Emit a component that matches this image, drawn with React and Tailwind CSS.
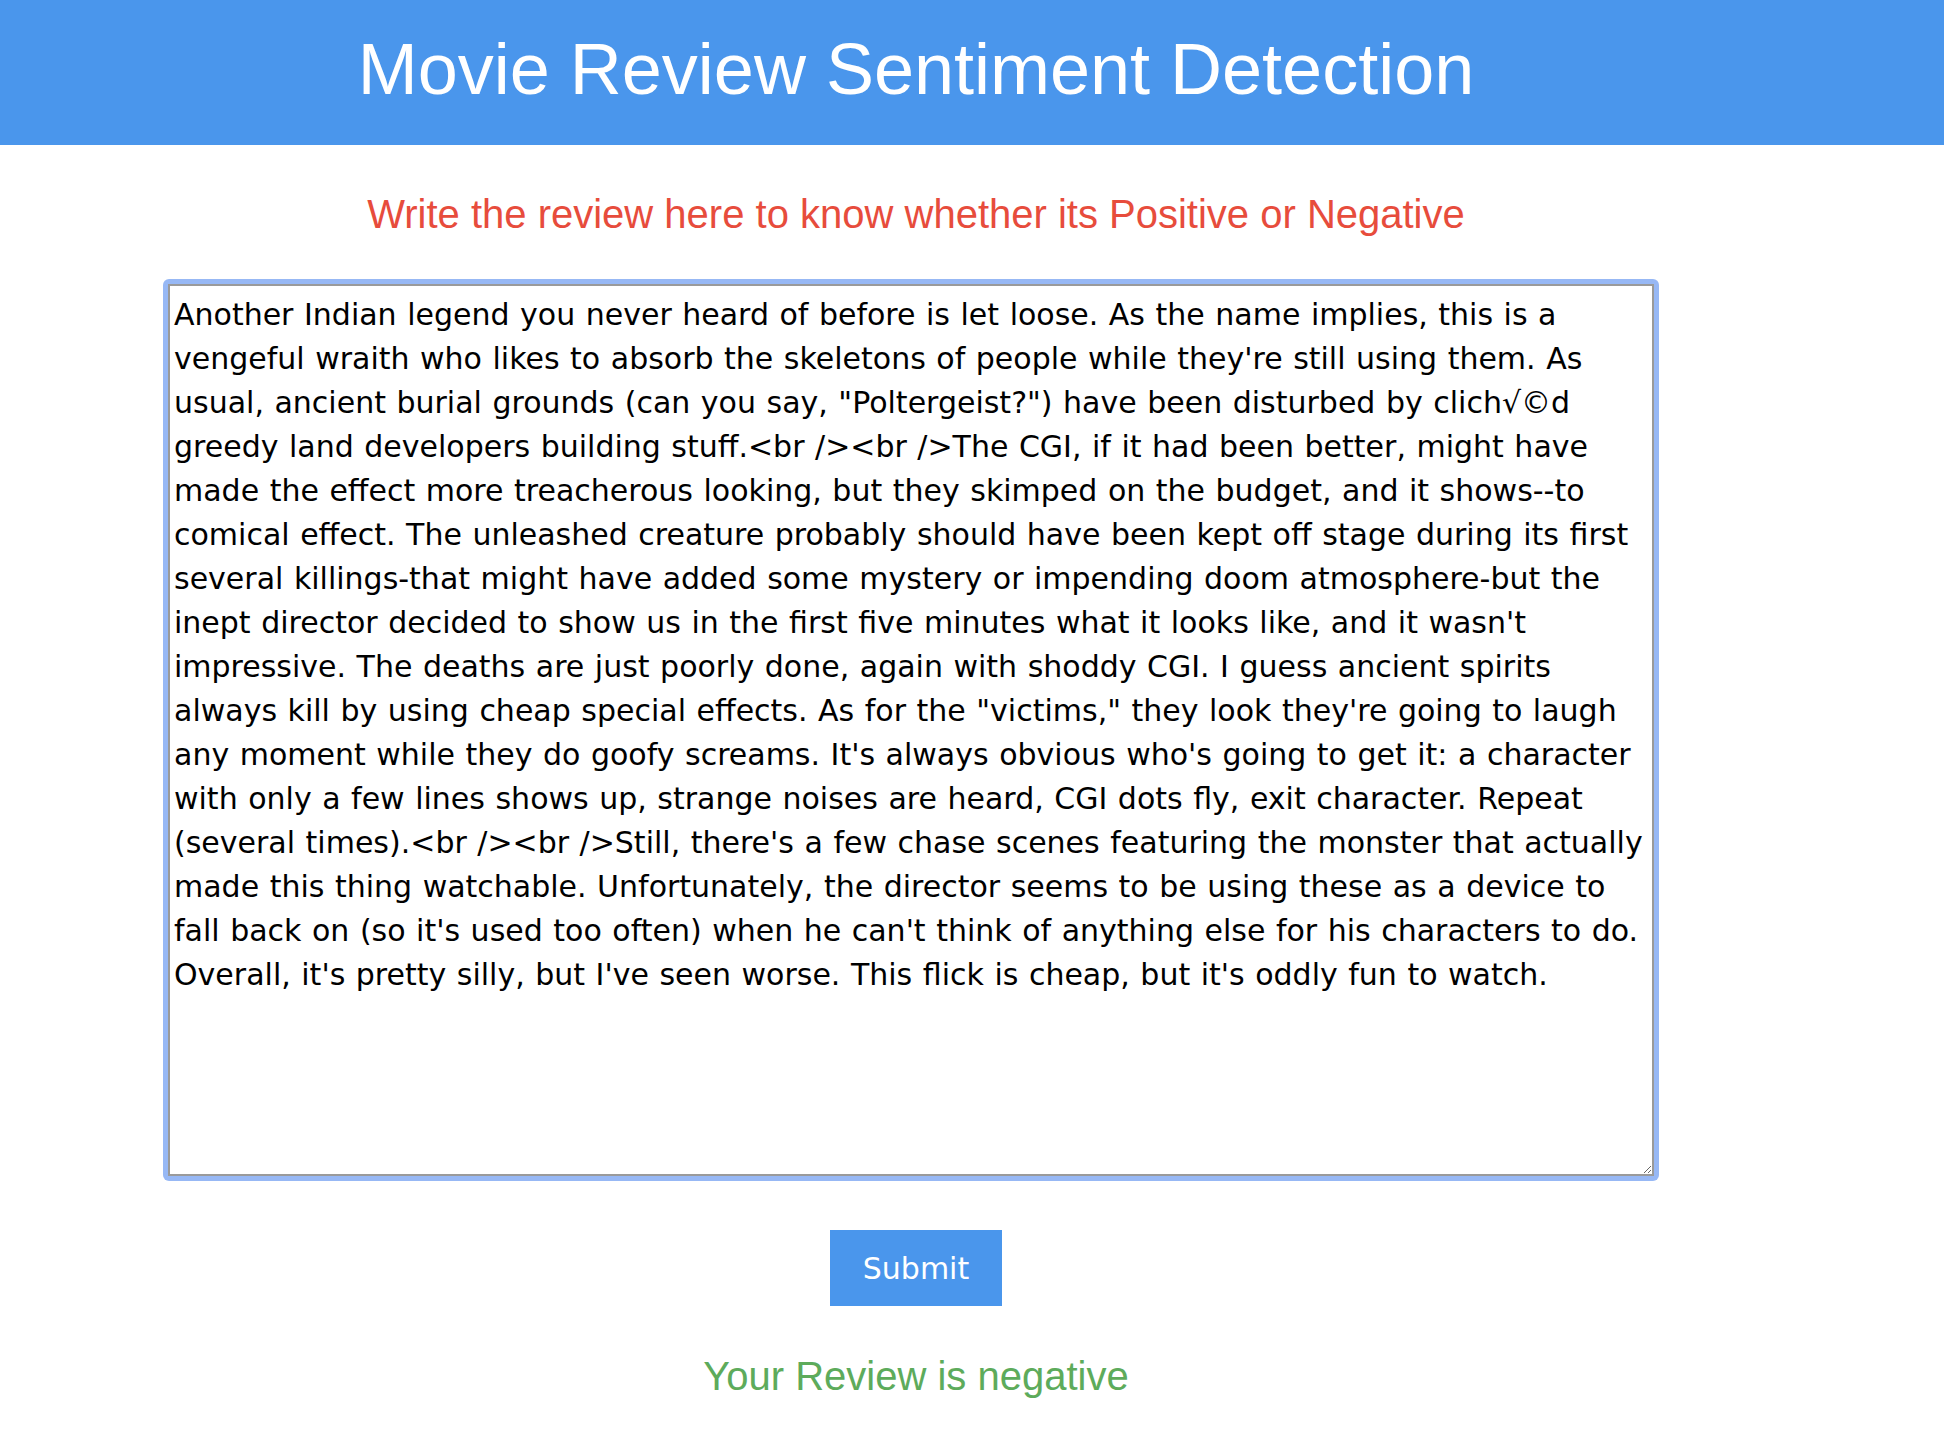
const REVIEW =
  'Another Indian legend you never heard of before is let loose. As the name implies, this is a vengeful wraith who likes to absorb the skeletons of people while they\'re still using them. As usual, ancient burial grounds (can you say, "Poltergeist?") have been disturbed by clich√©d greedy land developers building stuff.<br /><br />The CGI, if it had been better, might have made the effect more treacherous looking, but they skimped on the budget, and it shows--to comical effect. The unleashed creature probably should have been kept off stage during its first several killings-that might have added some mystery or impending doom atmosphere-but the inept director decided to show us in the first five minutes what it looks like, and it wasn\'t impressive. The deaths are just poorly done, again with shoddy CGI. I guess ancient spirits always kill by using cheap special effects. As for the "victims," they look they\'re going to laugh any moment while they do goofy screams. It\'s always obvious who\'s going to get it: a character with only a few lines shows up, strange noises are heard, CGI dots fly, exit character. Repeat (several times).<br /><br />Still, there\'s a few chase scenes featuring the monster that actually made this thing watchable. Unfortunately, the director seems to be using these as a device to fall back on (so it\'s used too often) when he can\'t think of anything else for his characters to do. Overall, it\'s pretty silly, but I\'ve seen worse. This flick is cheap, but it\'s oddly fun to watch.';

const App = () => {
  return (
    <div className="min-h-screen bg-white font-['Liberation_Sans',Arial,sans-serif]">
      <header className="w-full h-[145px] bg-[#4a96ec]">
        <div className="w-[1832px] pt-[33px] text-center">
          <h1 className="text-[72px] leading-[72px] font-normal text-white">
            Movie Review Sentiment Detection
          </h1>
        </div>
      </header>

      <main className="w-[1832px] flex flex-col items-center">
        <h3 className="mt-[49px] text-[40px] leading-[40px] text-[#e74c3c]">
          Write the review here to know whether its Positive or Negative
        </h3>

        <div className="self-start ml-[163px] mt-[45px] p-[5px] bg-[#97b8f5] rounded-[6px]">
          <textarea
            defaultValue={REVIEW}
            spellCheck={false}
            className="block w-[1486px] h-[892px] border-2 border-[#9a9a9a] bg-white pt-[7px] px-[4px] text-[30px] leading-[44px] text-black outline-none font-['DejaVu_Sans',Verdana,sans-serif] [word-spacing:1px]"
          />
        </div>

        <button className="mt-[49px] w-[172px] h-[76px] bg-[#4a96ec] text-white text-[30px] font-['DejaVu_Sans',Verdana,sans-serif]">
          Submit
        </button>

        <p className="mt-[50px] text-[40px] leading-[40px] text-[#5dab5b]">
          Your Review is negative
        </p>
      </main>
    </div>
  );
};

export default App;
